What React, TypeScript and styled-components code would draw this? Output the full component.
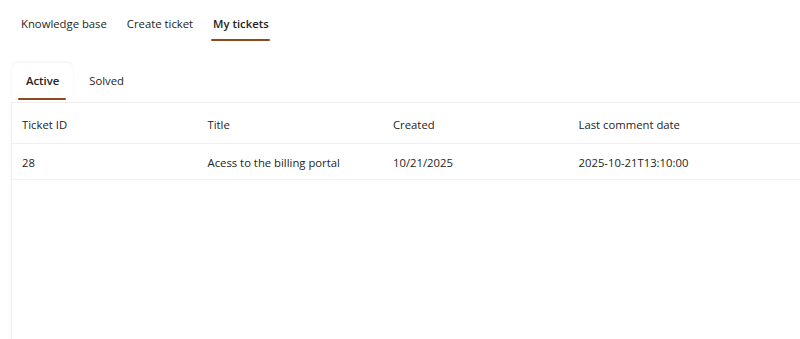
import React from 'react';
import styled, { createGlobalStyle } from 'styled-components';

const GlobalStyle = createGlobalStyle`
  body {
    margin: 0;
    background: #ffffff;
    font-family: "Segoe UI", "Open Sans", "Noto Sans", Arial, sans-serif;
    color: #242424;
    overflow: hidden;
  }
`;

const Page = styled.div`
  width: 800px;
  height: 339px;
  overflow: hidden;
`;

const NavBar = styled.div`
  display: flex;
  padding: 9px 0 0 11px;
`;

const NavTab = styled.div<{ $active?: boolean }>`
  position: relative;
  padding: 6px 10px 8px;
  font-size: 11.3px;
  line-height: 18px;
  font-weight: ${p => (p.$active ? 600 : 400)};
  color: #242424;
  cursor: pointer;

  &::after {
    content: '';
    display: ${p => (p.$active ? 'block' : 'none')};
    position: absolute;
    left: 8px;
    right: 9px;
    bottom: 0;
    height: 2px;
    border-radius: 1px;
    background: #8c4a1e;
  }
`;

const Panel = styled.div`
  margin: 22px 0 0 11px;
`;

const SubTabs = styled.div`
  display: flex;
  padding-left: 1px;
  position: relative;
  z-index: 1;
`;

const SubTab = styled.div<{ $active?: boolean }>`
  position: relative;
  height: 39px;
  padding: 0 14px 4px;
  box-sizing: border-box;
  display: flex;
  align-items: center;
  font-size: 11.3px;
  font-weight: ${p => (p.$active ? 600 : 400)};
  background: ${p => (p.$active ? '#ffffff' : 'transparent')};
  border-radius: 6px 6px 0 0;
  box-shadow: ${p => (p.$active ? '0 -1px 3px rgba(0, 0, 0, 0.06)' : 'none')};
  margin-right: 2px;
  cursor: pointer;

  &::after {
    content: '';
    display: ${p => (p.$active ? 'block' : 'none')};
    position: absolute;
    left: 6px;
    right: 7px;
    bottom: 2px;
    height: 2px;
    border-radius: 1px;
    background: #8c4a1e;
  }
`;

const Card = styled.div`
  height: 240px;
  background: #ffffff;
  border-left: 1px solid #f0f0f0;
  border-top: 1px solid #f0f0f0;
  box-shadow: -1px 0 2px rgba(0, 0, 0, 0.03);
`;

const Row = styled.div<{ $header?: boolean }>`
  display: grid;
  grid-template-columns: repeat(4, 185.5px);
  height: ${p => (p.$header ? '41px' : '36px')};
  align-items: center;
  border-bottom: 1px solid #f0f0f0;
  padding-top: ${p => (p.$header ? '2px' : '1px')};
  box-sizing: border-box;
`;

const Cell = styled.div`
  padding-left: 10px;
  font-size: 11.3px;
  color: #242424;
  white-space: nowrap;
`;

const columns = ['Ticket ID', 'Title', 'Created', 'Last comment date'];
const tickets = [
  { id: '28', title: 'Acess to the billing portal', created: '10/21/2025', last: '2025-10-21T13:10:00' },
];

export default function App() {
  return (
    <Page>
      <GlobalStyle />
      <NavBar>
        <NavTab>Knowledge base</NavTab>
        <NavTab>Create ticket</NavTab>
        <NavTab $active>My tickets</NavTab>
      </NavBar>
      <Panel>
        <SubTabs>
          <SubTab $active>Active</SubTab>
          <SubTab>Solved</SubTab>
        </SubTabs>
        <Card>
          <Row $header>
            {columns.map(c => (
              <Cell key={c}>{c}</Cell>
            ))}
          </Row>
          {tickets.map(t => (
            <Row key={t.id}>
              <Cell>{t.id}</Cell>
              <Cell>{t.title}</Cell>
              <Cell>{t.created}</Cell>
              <Cell>{t.last}</Cell>
            </Row>
          ))}
        </Card>
      </Panel>
    </Page>
  );
}
